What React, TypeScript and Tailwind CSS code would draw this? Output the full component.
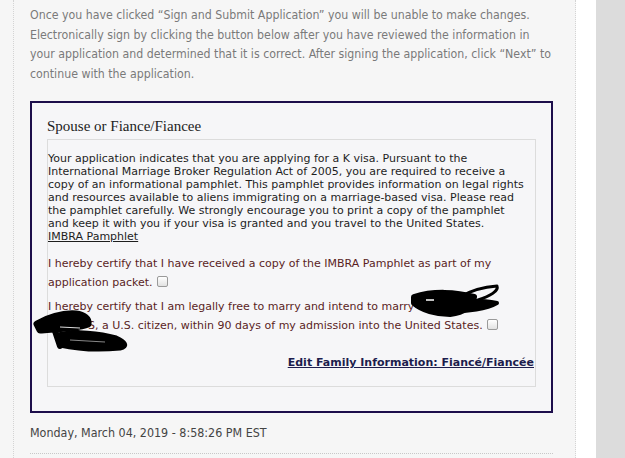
export default function App() {
  const cb = (
    <span className="inline-block w-[11px] h-[11px] ml-[4px] align-[-1px] rounded-[2px] border border-[#9a9a9a] bg-gradient-to-b from-white to-[#e2e2e2]" />
  );
  return (
    <div className="relative flex w-[625px] h-[458px] overflow-hidden bg-white">
      <div className="w-[576px] h-full shrink-0 bg-[#f6f6f6] pl-[13px]">
        <div className="h-full border-x border-dotted border-[#d4d4d4] pl-[16px] pr-[22px] pt-[6px]">
          <p className="whitespace-nowrap text-[12.25px] leading-[19.5px] text-[#7a7a7a] font-['DejaVu_Sans_Condensed',sans-serif]">
            Once you have clicked “Sign and Submit Application” you will be unable to make changes.
            <br />
            Electronically sign by clicking the button below after you have reviewed the information in
            <br />
            your application and determined that it is correct. After signing the application, click “Next” to
            <br />
            continue with the application.
          </p>

          <div className="mt-[17px] border-2 border-[#1d0e4b] bg-[#f6f6f8] px-[15px] pt-[13px] pb-[24px]">
            <h2 className="text-[15px] leading-[20px] text-[#222] font-['Liberation_Serif',serif]">
              Spouse or Fiance/Fiancee
            </h2>
            <div className="mt-[3px] border border-[#dcdcdc] pt-[12px] pb-[15px] pr-[1px] font-['DejaVu_Sans',sans-serif] text-[11px] whitespace-nowrap">
              <p className="leading-[13px] text-[#1e1e1e]">
                Your application indicates that you are applying for a K visa. Pursuant to the
                <br />
                International Marriage Broker Regulation Act of 2005, you are required to receive a
                <br />
                copy of an informational pamphlet. This pamphlet provides information on legal rights
                <br />
                and resources available to aliens immigrating on a marriage-based visa. Please read
                <br />
                the pamphlet carefully. We strongly encourage you to print a copy of the pamphlet
                <br />
                and keep it with you if your visa is granted and you travel to the United States.
                <br />
                <a className="underline text-[#1e1e1e]">IMBRA Pamphlet</a>
              </p>
              <p className="mt-[12px] leading-[18.5px] text-[#5a1e1e]">
                I hereby certify that I have received a copy of the IMBRA Pamphlet as part of my
                <br />
                application packet.{cb}
              </p>
              <p className="mt-[6px] leading-[18.5px] text-[#5a1e1e]">
                I hereby certify that I am legally free to marry and intend to marry
                <br />
                <span className="inline-block w-[40px]" />S, a U.S. citizen, within 90 days of my admission into the United States.{cb}
              </p>
              <div className="mt-[20px] flex justify-end">
                <a className="font-bold underline leading-[16px] text-[#1d1d4d]">
                  Edit Family Information: Fiancé/Fiancée
                </a>
              </div>
            </div>
          </div>

          <p className="mt-[12px] text-[12.4px] leading-[16px] text-[#444] font-['DejaVu_Sans_Condensed',sans-serif]">
            Monday, March 04, 2019 - 8:58:26 PM EST
          </p>
          <div className="mt-[12px] border-t border-dotted border-[#c8c8c8]" />
        </div>
      </div>
      <div className="w-[20px] h-full shrink-0 bg-white" />
      <div className="flex-1 h-full bg-[#dcdcdc]" />

      <svg
        className="pointer-events-none absolute left-0 top-0"
        width="625"
        height="458"
        viewBox="0 0 625 458"
      >
        <g fill="#000" stroke="#000" strokeLinecap="round" strokeLinejoin="round">
          <path d="M37 324 C48 318 62 313 76 314 C84 315 89 319 88 324 C78 328 58 329 40 330 Z" strokeWidth="7" />
          <path d="M58 335 C75 331 100 333 116 338 C125 342 128 346 120 348 C100 350 78 349 60 345 Z" strokeWidth="5" />
          <path d="M52 322 L60 346" strokeWidth="6" />
          <path d="M72 329 L84 335" strokeWidth="4" />
          <path d="M414 297 C433 291 456 292 474 297 C472 306 464 312 450 314 C436 314 422 310 414 303 Z" strokeWidth="6" />
          <path d="M460 297 C470 291 482 287 497 286 C499 291 490 296 478 300" strokeWidth="3" fill="none" />
          <path d="M443 303 C460 300 483 300 497 303 C487 309 468 312 448 311" strokeWidth="4" />
        </g>
        <path d="M60 327 L80 328" stroke="#ddd" strokeWidth="1" />
        <path d="M70 340 L105 342" stroke="#888" strokeWidth="1" />
        <path d="M426 300 L434 300" stroke="#fff" strokeWidth="1.5" />
      </svg>
    </div>
  );
}
